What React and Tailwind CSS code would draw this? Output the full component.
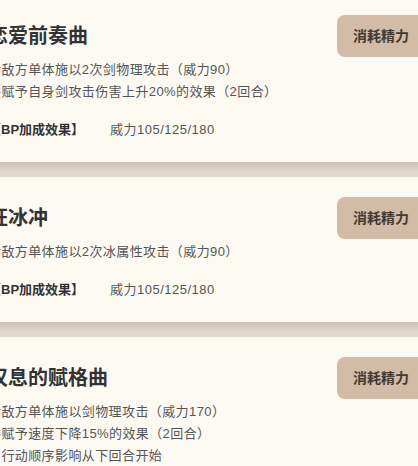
import React from 'react';

const skills = [
  {
    name: '恋爱前奏曲',
    lines: ['对敌方单体施以2次剑物理攻击（威力90）', '并赋予自身剑攻击伤害上升20%的效果（2回合）'],
    bp: '威力105/125/180',
  },
  {
    name: '狂冰冲',
    lines: ['对敌方单体施以2次冰属性攻击（威力90）'],
    bp: '威力105/125/180',
  },
  {
    name: '叹息的赋格曲',
    lines: ['对敌方单体施以剑物理攻击（威力170）', '并赋予速度下降15%的效果（2回合）', '※行动顺序影响从下回合开始'],
    bp: '威力190/210/250',
  },
];

const SkillCard = ({ skill }) => {
  return (
    <div className="bg-[#fcf9f3] pt-[20px] pb-[21px] pl-[16px] pr-[16px] shadow-[0_5px_10px_rgba(90,70,40,0.22)]">
      <div className="flex items-center justify-between">
        <h2 className="text-[20px] font-bold text-[#333333] leading-[28px]">{skill.name}</h2>
        <div className="h-[42px] px-4 flex items-center rounded-lg bg-[#d2bba7] text-[14px] font-semibold text-[#453a30]">
          消耗精力
        </div>
      </div>
      <div className="mt-[2px] text-[13px] leading-[22px] tracking-[0.4px] text-[#555555]">
        {skill.lines.map((line) => (
          <p key={line}>{line}</p>
        ))}
      </div>
      <div className="mt-[16px] flex text-[13px] leading-[22px]">
        <span className="w-[122px] font-bold text-[#333333]">【BP加成效果】</span>
        <span className="tracking-[0.5px] text-[#555555]">{skill.bp}</span>
      </div>
    </div>
  );
};

const App = () => {
  return (
    <div
      className="w-[418px] h-[466px] overflow-hidden bg-[#e6dfd3]"
      style={{ fontFamily: '"Liberation Sans", "Noto Sans CJK SC", sans-serif' }}
    >
      <div className="-mt-[5px] -ml-[28px] w-[469px] flex flex-col gap-[15px]">
        {skills.map((skill) => (
          <SkillCard key={skill.name} skill={skill} />
        ))}
      </div>
    </div>
  );
};

export default App;
